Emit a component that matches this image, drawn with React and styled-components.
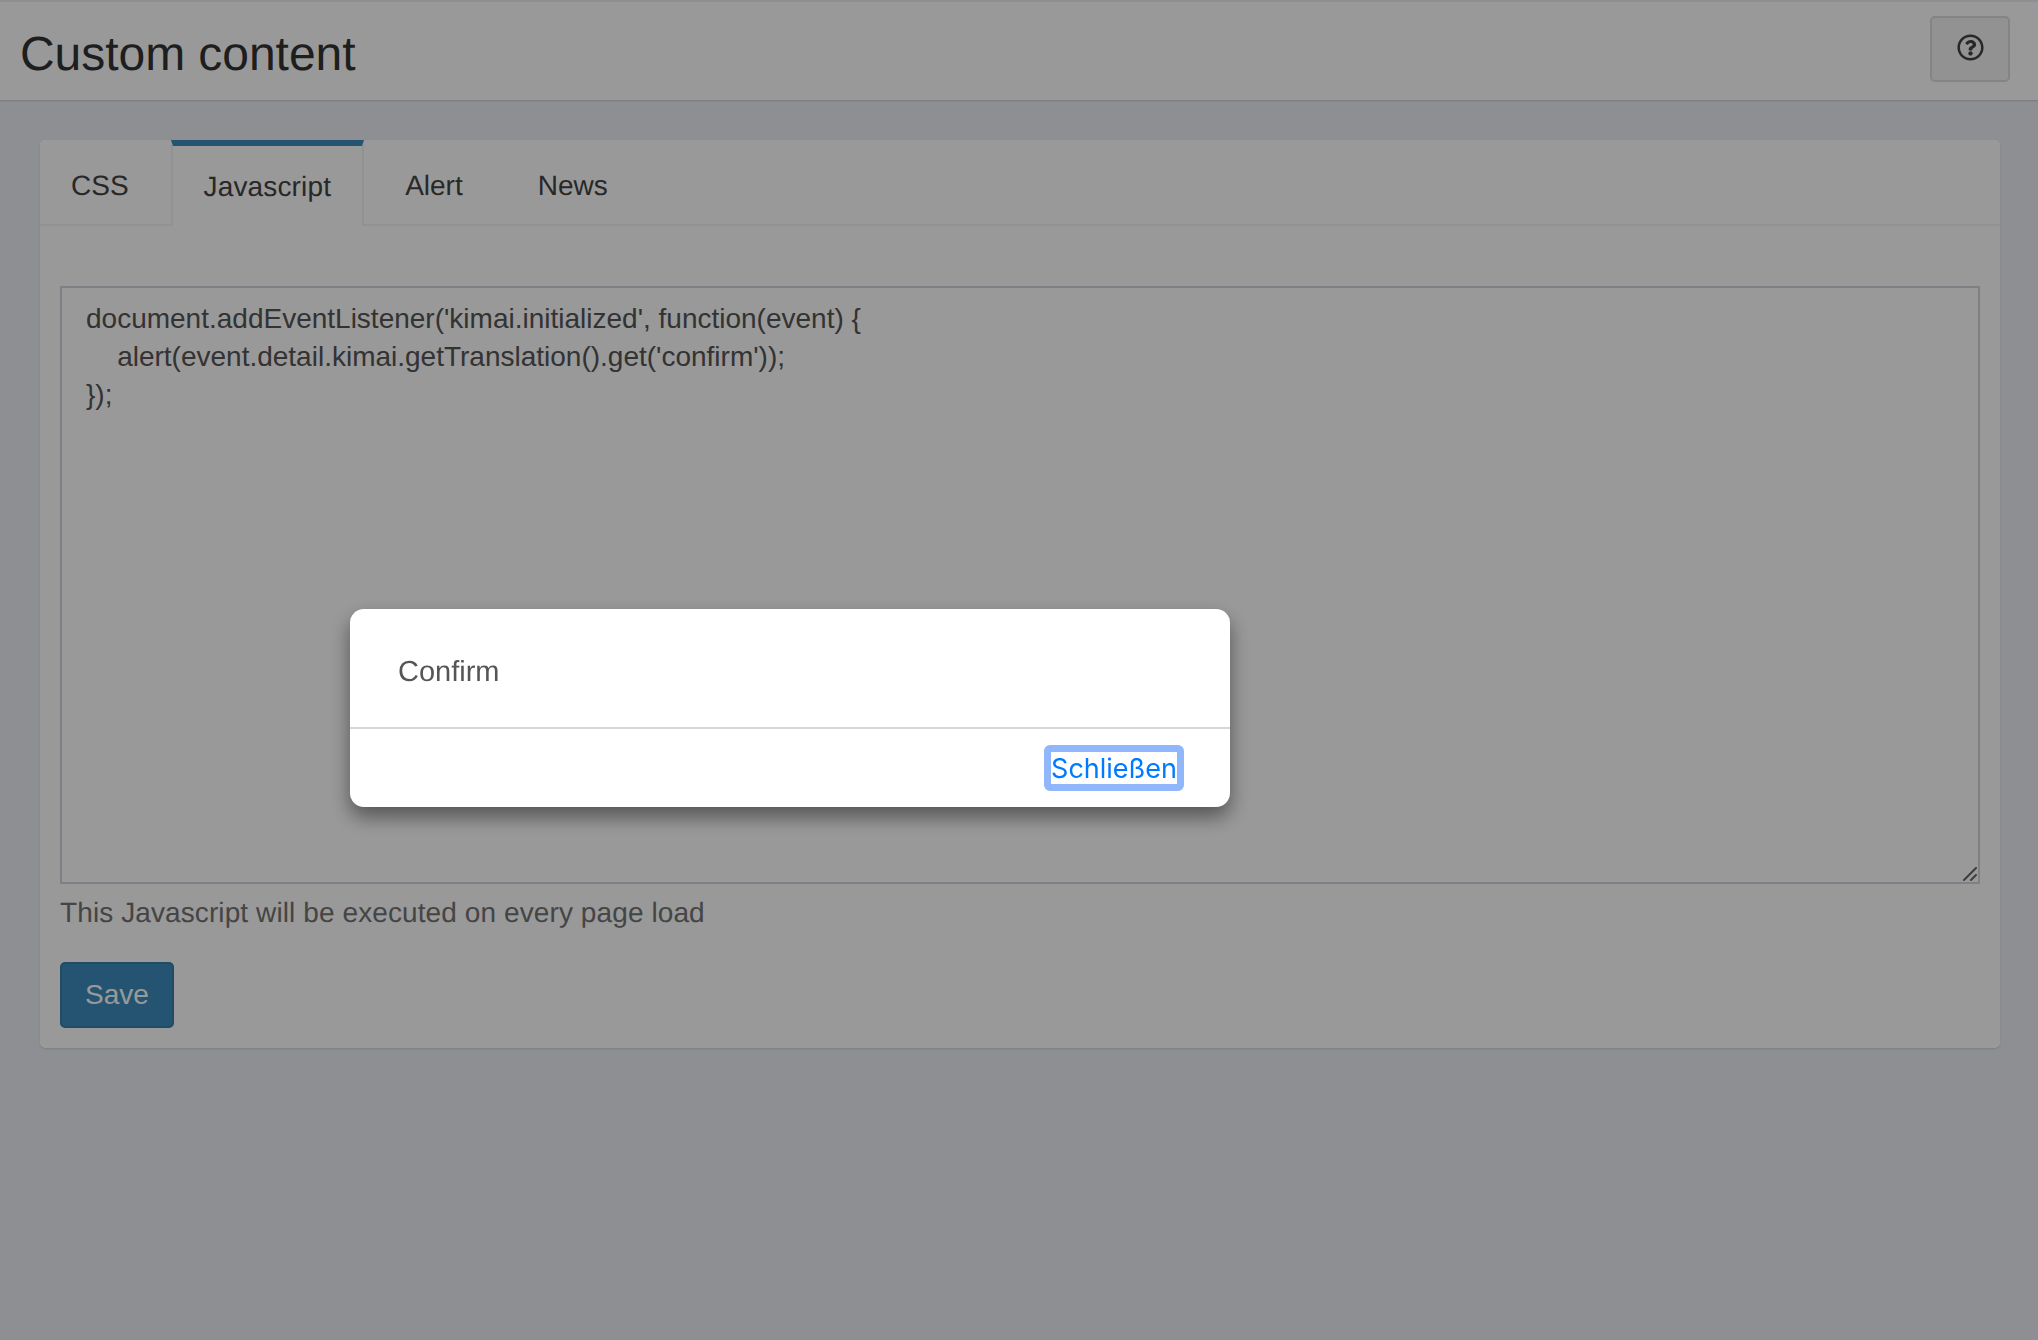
import React from "react";
import styled, { createGlobalStyle } from "styled-components";
import { FaRegQuestionCircle } from "react-icons/fa";

const code = `document.addEventListener('kimai.initialized', function(event) {
    alert(event.detail.kimai.getTranslation().get('confirm'));
});`;

const tabs = ["CSS", "Javascript", "Alert", "News"];

const gripIcon = `url("data:image/svg+xml,%3Csvg xmlns='http://www.w3.org/2000/svg' width='15' height='15' viewBox='0 0 15 15'%3E%3Cpath d='M1 13 13 1M8 13l5-5' stroke='%23666' stroke-width='2' stroke-linecap='round'/%3E%3C/svg%3E")`;

function App() {
  return (
    <>
      <GlobalStyle />
      <Page>
        <Header>
          <Title>Custom content</Title>
          <HelpButton type="button" aria-label="Help">
            <FaRegQuestionCircle />
          </HelpButton>
        </Header>
        <Content>
          <Card>
            <TabBar>
              {tabs.map((tab) => (
                <Tab key={tab} $active={tab === "Javascript"}>
                  {tab}
                </Tab>
              ))}
            </TabBar>
            <TabBody>
              <CodeArea defaultValue={code} spellCheck={false} />
              <HelpText>This Javascript will be executed on every page load</HelpText>
              <SaveButton type="button">Save</SaveButton>
            </TabBody>
          </Card>
        </Content>
      </Page>
      <Overlay>
        <Dialog>
          <Message>Confirm</Message>
          <DialogFooter>
            <CloseButton type="button">Schließen</CloseButton>
          </DialogFooter>
        </Dialog>
      </Overlay>
    </>
  );
}

const GlobalStyle = createGlobalStyle`
  html, body {
    margin: 0;
    padding: 0;
    height: 100%;
  }
  body {
    font-family: "Liberation Sans", Arial, sans-serif;
    background: #edeef5;
    color: #333;
    text-rendering: geometricPrecision;
  }
  * {
    box-sizing: border-box;
  }
`;

const Page = styled.div`
  min-height: 1340px;
  background: #edeef5;
`;

const Header = styled.header`
  height: 100px;
  padding: 0 28px 4px 20px;
  display: flex;
  align-items: center;
  justify-content: space-between;
  background: #fff;
  border-top: 2px solid #edeef5;
  box-shadow: 0 1px 2px rgba(0, 0, 0, 0.15);
`;

const Title = styled.h1`
  margin: 0;
  padding-top: 10px;
  font-size: 48px;
  font-weight: 400;
  letter-spacing: -0.05px;
  color: #333;
`;

const HelpButton = styled.button`
  width: 80px;
  height: 66px;
  padding: 0 0 4px;
  display: flex;
  align-items: center;
  justify-content: center;
  background: #f4f4f4;
  border: 2px solid #ddd;
  border-radius: 5px;
  color: #444;
  font-size: 27px;
`;

const Content = styled.main`
  padding: 40px 38px 0 40px;
`;

const Card = styled.section`
  height: 908px;
  background: #fff;
  border-radius: 5px;
  box-shadow: 0 1px 2px rgba(0, 0, 0, 0.12);
  overflow: hidden;
`;

const TabBar = styled.div`
  height: 86px;
  display: flex;
  background: #fff;
  border-bottom: 2px solid #f4f4f4;
`;

const Tab = styled.div`
  height: ${(p) => (p.$active ? "86px" : "84px")};
  padding: 2px 31px 0;
  margin-right: ${(p) => (p.$active ? "8px" : "9px")};
  display: flex;
  align-items: center;
  font-size: 28px;
  letter-spacing: ${(p) => (p.$active ? "0.15px" : "0")};
  color: #444;
  background: #fff;
  border-top: 6px solid ${(p) => (p.$active ? "#3c8dbc" : "transparent")};
  border-left: 2px solid ${(p) => (p.$active ? "#f4f4f4" : "transparent")};
  border-right: 2px solid ${(p) => (p.$active ? "#f4f4f4" : "transparent")};
  &:first-child {
    margin-right: 9px;
    padding-left: 29px;
  }
`;

const TabBody = styled.div`
  padding: 60px 20px 20px 20px;
  display: flex;
  flex-direction: column;
  align-items: flex-start;
`;

const CodeArea = styled.textarea`
  width: 100%;
  height: 598px;
  padding: 12px 24px;
  background: #fff;
  border: 2px solid #d2d6de;
  outline: none;
  font-family: "Liberation Sans", Arial, sans-serif;
  font-size: 28px;
  line-height: 38px;
  color: #555;
  display: block;
  &::-webkit-resizer {
    background: ${gripIcon} no-repeat center;
  }
`;

const HelpText = styled.p`
  margin: 12px 0 0;
  height: 66px;
  font-size: 28px;
  line-height: 34px;
  letter-spacing: 0.1px;
  color: #737373;
`;

const SaveButton = styled.button`
  width: 114px;
  height: 66px;
  padding: 0;
  background: #3c8dbc;
  border: 2px solid #367fa9;
  border-radius: 5px;
  font-family: "Liberation Sans", Arial, sans-serif;
  font-size: 28px;
  color: #fff;
`;

const Overlay = styled.div`
  position: fixed;
  inset: 0;
  background: rgba(0, 0, 0, 0.4);
`;

const Dialog = styled.div`
  position: absolute;
  left: 350px;
  top: 609px;
  width: 880px;
  height: 198px;
  background: #fff;
  border-radius: 14px;
  box-shadow: 0 10px 20px rgba(0, 0, 0, 0.45);
  overflow: hidden;
`;

const Message = styled.div`
  height: 120px;
  padding: 8px 48px 0;
  display: flex;
  align-items: center;
  font-size: 29px;
  color: #555;
  border-bottom: 2px solid #d6d6d6;
`;

const DialogFooter = styled.div`
  height: 78px;
  padding: 16px 46px 0 0;
  display: flex;
  justify-content: flex-end;
  align-items: flex-start;
`;

const CloseButton = styled.button`
  width: 140px;
  height: 46px;
  padding: 2px 0 0;
  background: #fff;
  border: 7px solid #90b6fb;
  border-radius: 6px;
  font-family: Inter, "Liberation Sans", sans-serif;
  font-size: 27px;
  line-height: 30px;
  color: #007aff;
`;

export default App;
